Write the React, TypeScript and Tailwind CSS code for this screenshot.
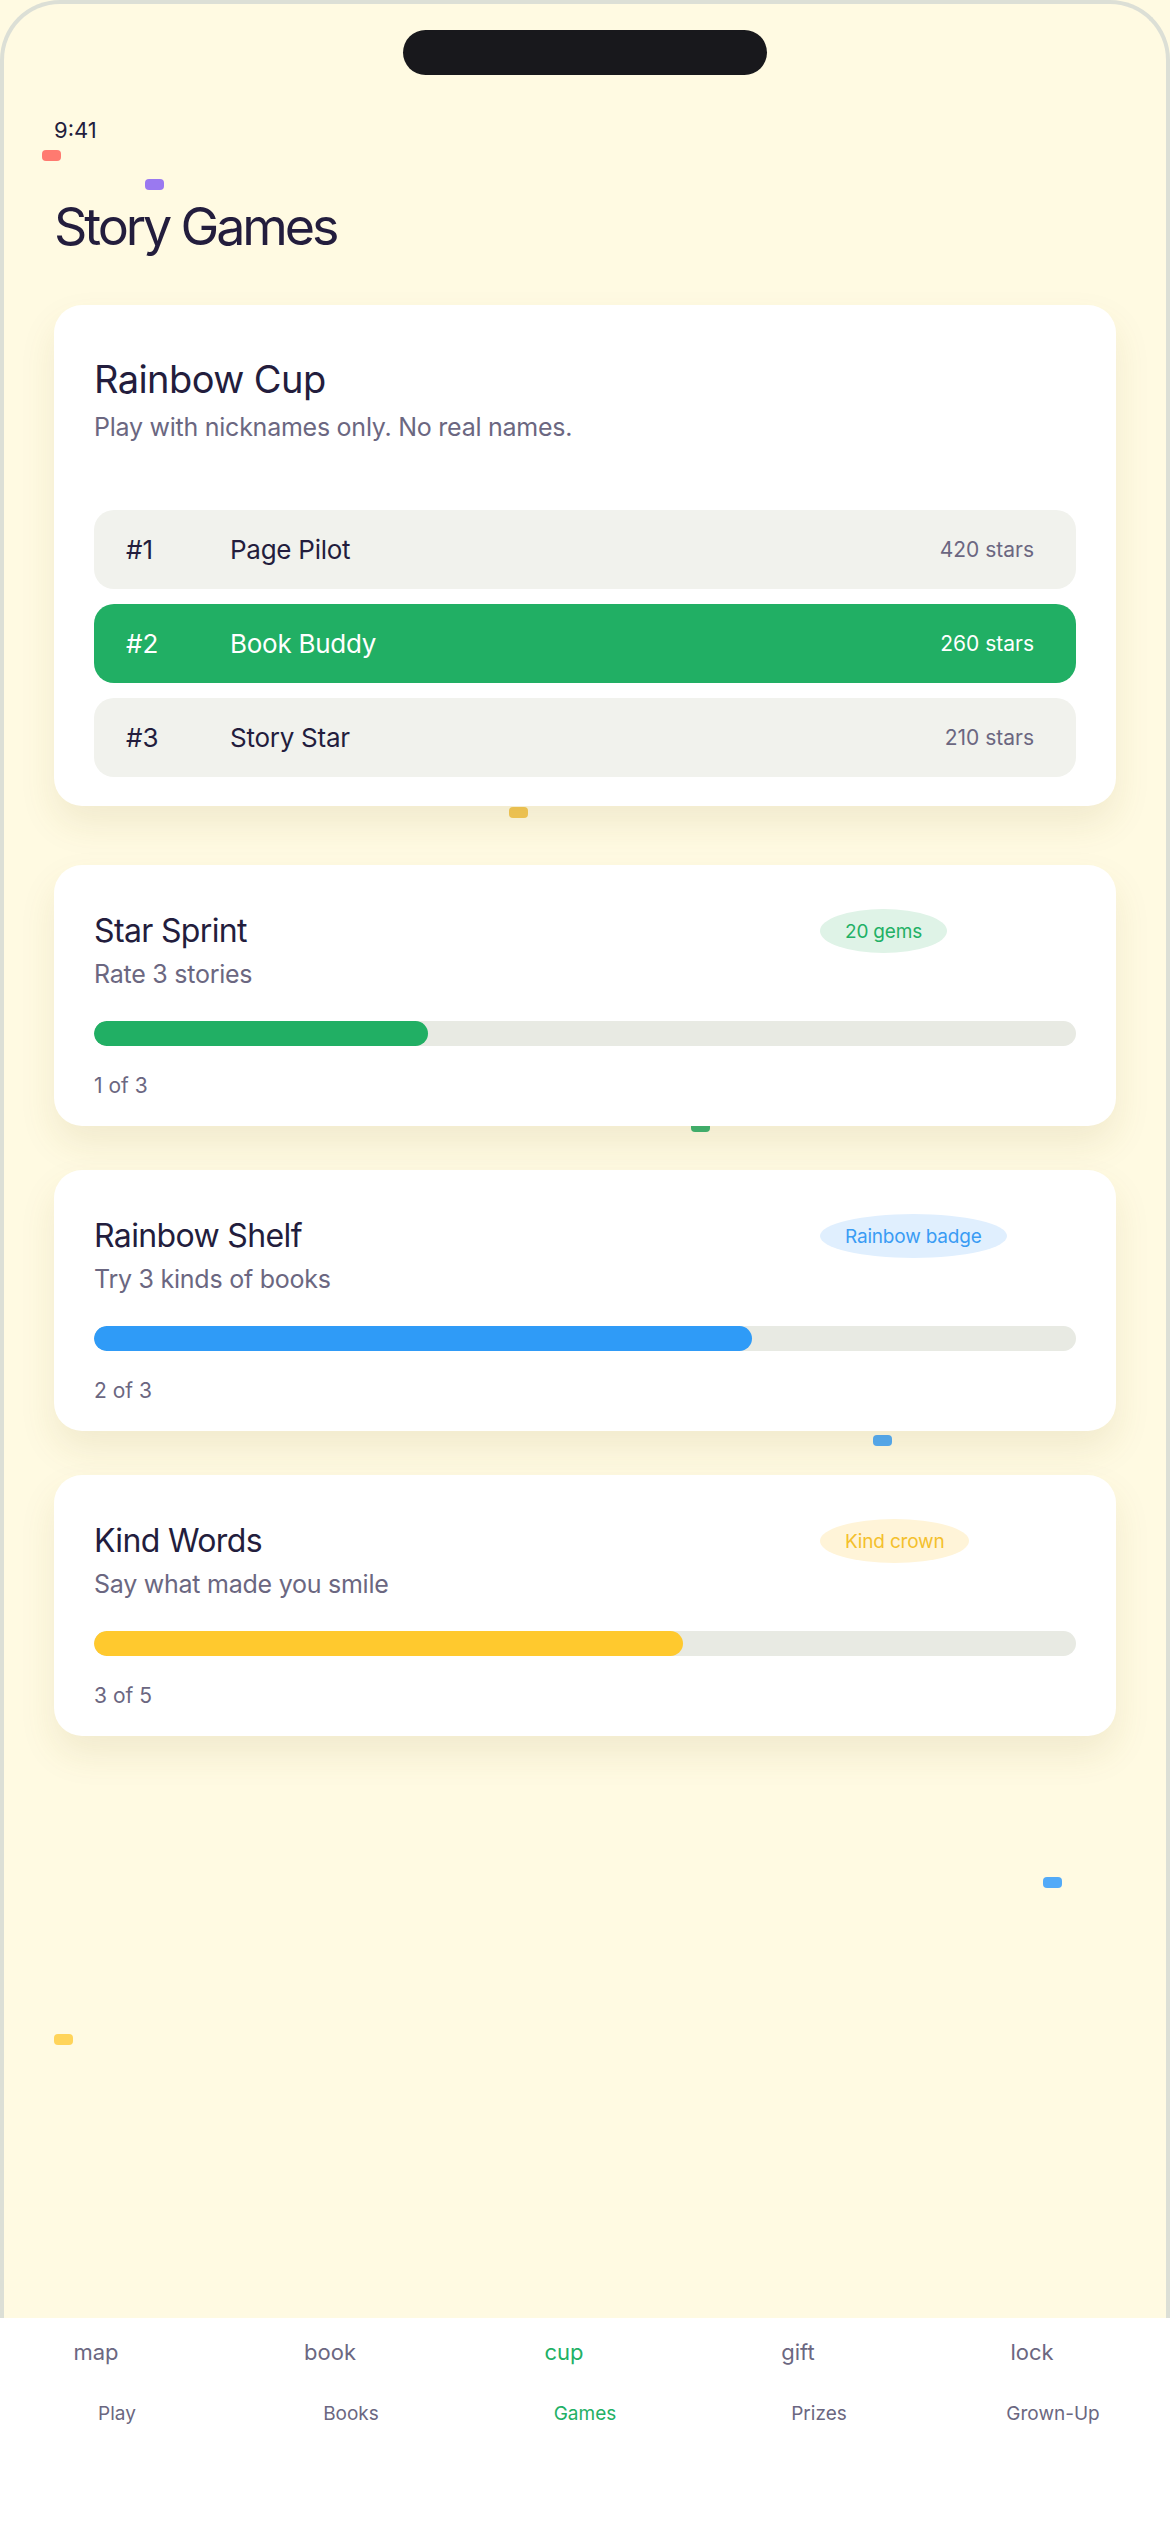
import React from 'react';

const leaders = [
  { rank: '#1', name: 'Page Pilot', stars: '420 stars', active: false },
  { rank: '#2', name: 'Book Buddy', stars: '260 stars', active: true },
  { rank: '#3', name: 'Story Star', stars: '210 stars', active: false },
];

const quests = [
  {
    title: 'Star Sprint',
    sub: 'Rate 3 stories',
    badge: '20 gems',
    count: '1 of 3',
    pct: 34,
    badgeCls: 'bg-[#dff3e7] text-[#22b065]',
    barCls: 'bg-[#21af64]',
  },
  {
    title: 'Rainbow Shelf',
    sub: 'Try 3 kinds of books',
    badge: 'Rainbow badge',
    count: '2 of 3',
    pct: 67,
    badgeCls: 'bg-[#e0effe] text-[#3a9cf4]',
    barCls: 'bg-[#2f9bf7]',
  },
  {
    title: 'Kind Words',
    sub: 'Say what made you smile',
    badge: 'Kind crown',
    count: '3 of 5',
    pct: 60,
    badgeCls: 'bg-[#fff4d8] text-[#f4c02c]',
    barCls: 'bg-[#ffc92e]',
  },
];

const tabs = [
  { icon: 'map', label: 'Play' },
  { icon: 'book', label: 'Books' },
  { icon: 'cup', label: 'Games', active: true },
  { icon: 'gift', label: 'Prizes' },
  { icon: 'lock', label: 'Grown-Up' },
];

const QuestCard = ({ q }: { q: (typeof quests)[number] }) => (
  <div className="relative z-10 bg-white rounded-[28px] px-[40px] pt-[44px] pb-[30px] shadow-[0_18px_36px_rgba(120,100,30,0.10)]">
    <div className="flex items-center h-[44px]">
      <h2 className="flex-1 text-[32px] leading-none tracking-[-0.02em] text-[#231d3d]">{q.title}</h2>
      <div className="w-[256px]">
        <span
          className={`inline-flex items-center h-[44px] px-[25px] rounded-[50%] text-[19px] leading-none tracking-[-0.01em] ${q.badgeCls}`}
        >
          {q.badge}
        </span>
      </div>
    </div>
    <p className="mt-[9px] text-[25px] leading-none tracking-[-0.01em] text-[#6b6781]">{q.sub}</p>
    <div className="mt-[34px] h-[25px] rounded-full bg-[#e8eae3] overflow-hidden">
      <div className={`h-full rounded-full ${q.barCls}`} style={{ width: `${q.pct}%` }} />
    </div>
    <p className="mt-[29px] text-[21px] leading-none text-[#6b6781]">{q.count}</p>
  </div>
);

export default function App() {
  return (
    <div className="w-[1170px] h-[2532px] flex flex-col bg-[#fffae2] font-['Inter',sans-serif] overflow-hidden">
      <div className="relative flex-1 border-4 border-b-0 border-[#dcdfd6] rounded-t-[60px] px-[50px]">
        {/* confetti */}
        <span className="absolute left-[38px] top-[146px] w-[19px] h-[11px] rounded-[4px] bg-[#ff7a70]" />
        <span className="absolute left-[141px] top-[175px] w-[19px] h-[11px] rounded-[4px] bg-[#9a79f0]" />
        <span className="absolute left-[505px] top-[803px] w-[19px] h-[11px] rounded-[4px] bg-[#f5c855]" />
        <span className="absolute left-[687px] top-[1117px] w-[19px] h-[11px] rounded-[4px] bg-[#3cb371]" />
        <span className="absolute left-[869px] top-[1431px] w-[19px] h-[11px] rounded-[4px] bg-[#52aaf5]" />
        <span className="absolute left-[1039px] top-[1873px] w-[19px] h-[11px] rounded-[4px] bg-[#52aaf8]" />
        <span className="absolute left-[50px] top-[2030px] w-[19px] h-[11px] rounded-[4px] bg-[#ffd45a]" />

        <div className="mx-auto mt-[26px] w-[364px] h-[45px] rounded-full bg-[#18181c]" />
        <div className="mt-[44px] text-[22px] leading-none text-[#231d3d]">9:41</div>
        <h1 className="mt-[60px] text-[52px] leading-none tracking-[-0.06em] text-[#231d3d]">Story Games</h1>

        <div className="relative z-10 mt-[52px] bg-white rounded-[28px] px-[40px] pt-[55px] pb-[29px] shadow-[0_18px_36px_rgba(120,100,30,0.10)]">
          <h2 className="text-[38px] leading-none tracking-[-0.015em] text-[#231d3d]">Rainbow Cup</h2>
          <p className="mt-[17px] text-[25px] leading-none tracking-[-0.01em] text-[#6b6781]">
            Play with nicknames only. No real names.
          </p>
          <div className="mt-[70px] flex flex-col gap-[15px]">
            {leaders.map((r) => (
              <div
                key={r.rank}
                className={`flex items-center h-[79px] rounded-[20px] pl-[32px] pr-[42px] ${
                  r.active ? 'bg-[#21af64] text-white' : 'bg-[#f1f2ed] text-[#231d3d]'
                }`}
              >
                <span className="w-[104px] text-[26px] leading-none">{r.rank}</span>
                <span className="flex-1 text-[26px] leading-none tracking-[-0.01em]">{r.name}</span>
                <span className={`text-[21px] leading-none ${r.active ? 'text-white' : 'text-[#6b6781]'}`}>{r.stars}</span>
              </div>
            ))}
          </div>
        </div>

        <div className="mt-[59px] flex flex-col gap-[44px]">
          {quests.map((q) => (
            <QuestCard key={q.title} q={q} />
          ))}
        </div>
      </div>

      <nav className="h-[214px] bg-white grid grid-cols-5">
        {tabs.map((t) => (
          <div
            key={t.label}
            className={`flex flex-col items-center pt-[23px] ${t.active ? 'text-[#22b065]' : 'text-[#6b6781]'}`}
          >
            <span className="mr-[42px] text-[22px] leading-none">{t.icon}</span>
            <span className="mt-[41px] text-[19px] leading-none">{t.label}</span>
          </div>
        ))}
      </nav>
    </div>
  );
}
